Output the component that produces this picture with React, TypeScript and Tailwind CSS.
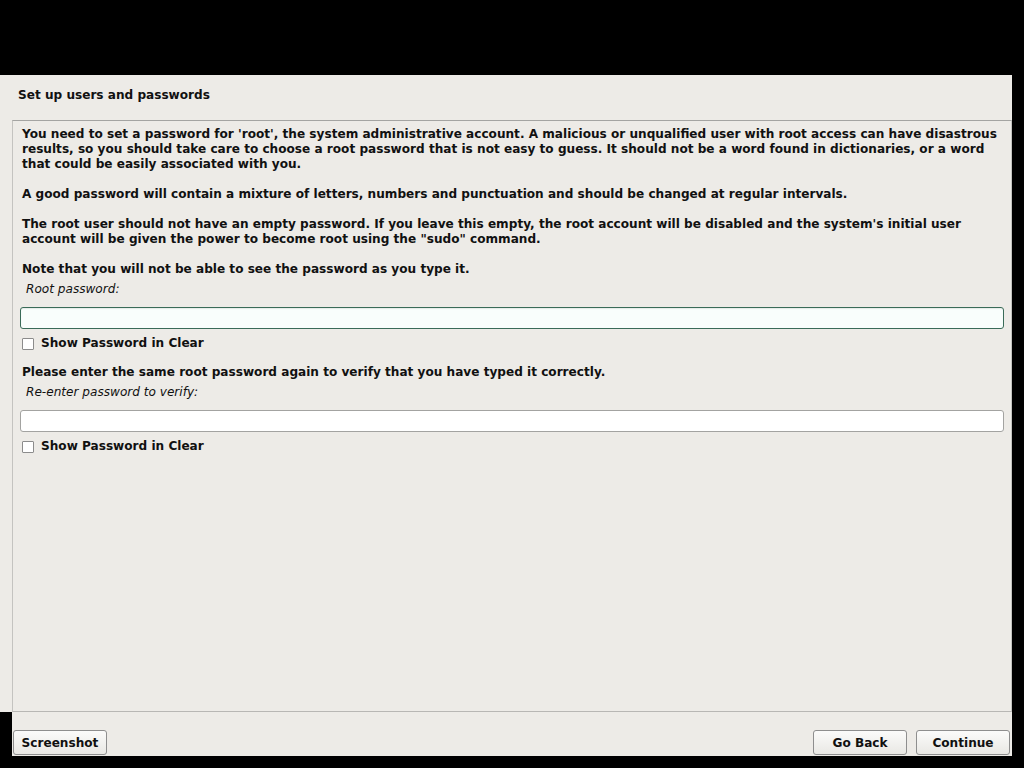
import React from "react";

const font = { fontFamily: '"DejaVu Sans", "Liberation Sans", sans-serif' };

function CheckRow() {
  return (
    <div className="mt-[7px] ml-[9px] flex items-center h-[15px]">
      <div className="w-[12px] h-[12px] border border-[#8c8c8c] bg-white rounded-[1px]" />
      <span className="ml-[7px] font-bold text-[12.1px] leading-[15px]">Show Password in Clear</span>
    </div>
  );
}

function Btn({ children }: { children: React.ReactNode }) {
  return (
    <div className="w-[94px] h-[25px] pt-[2px] rounded-[3px] border border-[#8e8e8e] bg-gradient-to-b from-[#fbfbfa] to-[#e9e8e4] flex items-center justify-center font-bold text-[12.1px] text-[#111]">
      {children}
    </div>
  );
}

export default function App() {
  return (
    <div className="w-[1024px] h-[768px] bg-black flex flex-col text-[#111]" style={font}>
      <div className="h-[75px]" />
      <div className="w-[1012px] h-[637px] bg-[#edebe7] flex flex-col">
        <div className="h-[45px] pl-[18px] pt-[13px] font-bold text-[12.1px] leading-[15px]">
          Set up users and passwords
        </div>
        <div className="ml-[12px] w-[1000px] flex-1 border-t border-l border-r border-b border-t-[#a4a4a2] border-l-[#c4c3c0] border-r-[#c4c3c0] border-b-[#b8b7b4] pt-[6px] text-[12.1px] leading-[15px]">
          <div className="pl-[9px] font-bold whitespace-nowrap">
            <p>
              You need to set a password for 'root', the system administrative account. A malicious or unqualified user with root access can have disastrous
              <br />
              results, so you should take care to choose a root password that is not easy to guess. It should not be a word found in dictionaries, or a word
              <br />
              that could be easily associated with you.
            </p>
            <p className="mt-[15px]">
              A good password will contain a mixture of letters, numbers and punctuation and should be changed at regular intervals.
            </p>
            <p className="mt-[15px]">
              The root user should not have an empty password. If you leave this empty, the root account will be disabled and the system's initial user
              <br />
              account will be given the power to become root using the "sudo" command.
            </p>
            <p className="mt-[15px]">Note that you will not be able to see the password as you type it.</p>
          </div>
          <div className="mt-[5px] pl-[13px] italic">Root password:</div>
          <div className="mt-[10px] mx-[7px] h-[22px] rounded-[3px] border border-[#3a6b58] bg-[#f9fefc] shadow-[inset_0_1px_1px_rgba(0,0,0,0.08)]" />
          <CheckRow />
          <div className="mt-[14px] pl-[9px] font-bold">
            Please enter the same root password again to verify that you have typed it correctly.
          </div>
          <div className="mt-[5px] pl-[13px] italic">Re-enter password to verify:</div>
          <div className="mt-[10px] mx-[7px] h-[22px] rounded-[3px] border border-[#a3a3a1] bg-white" />
          <CheckRow />
        </div>
      </div>
      <div className="ml-[12px] w-[1000px] h-[44px] bg-[#edebe7] flex items-start pt-[18px] pl-[1px] pr-[2px]">
        <Btn>Screenshot</Btn>
        <div className="flex-1" />
        <Btn>Go Back</Btn>
        <div className="w-[9px]" />
        <Btn>Continue</Btn>
      </div>
      <div className="flex-1" />
    </div>
  );
}
